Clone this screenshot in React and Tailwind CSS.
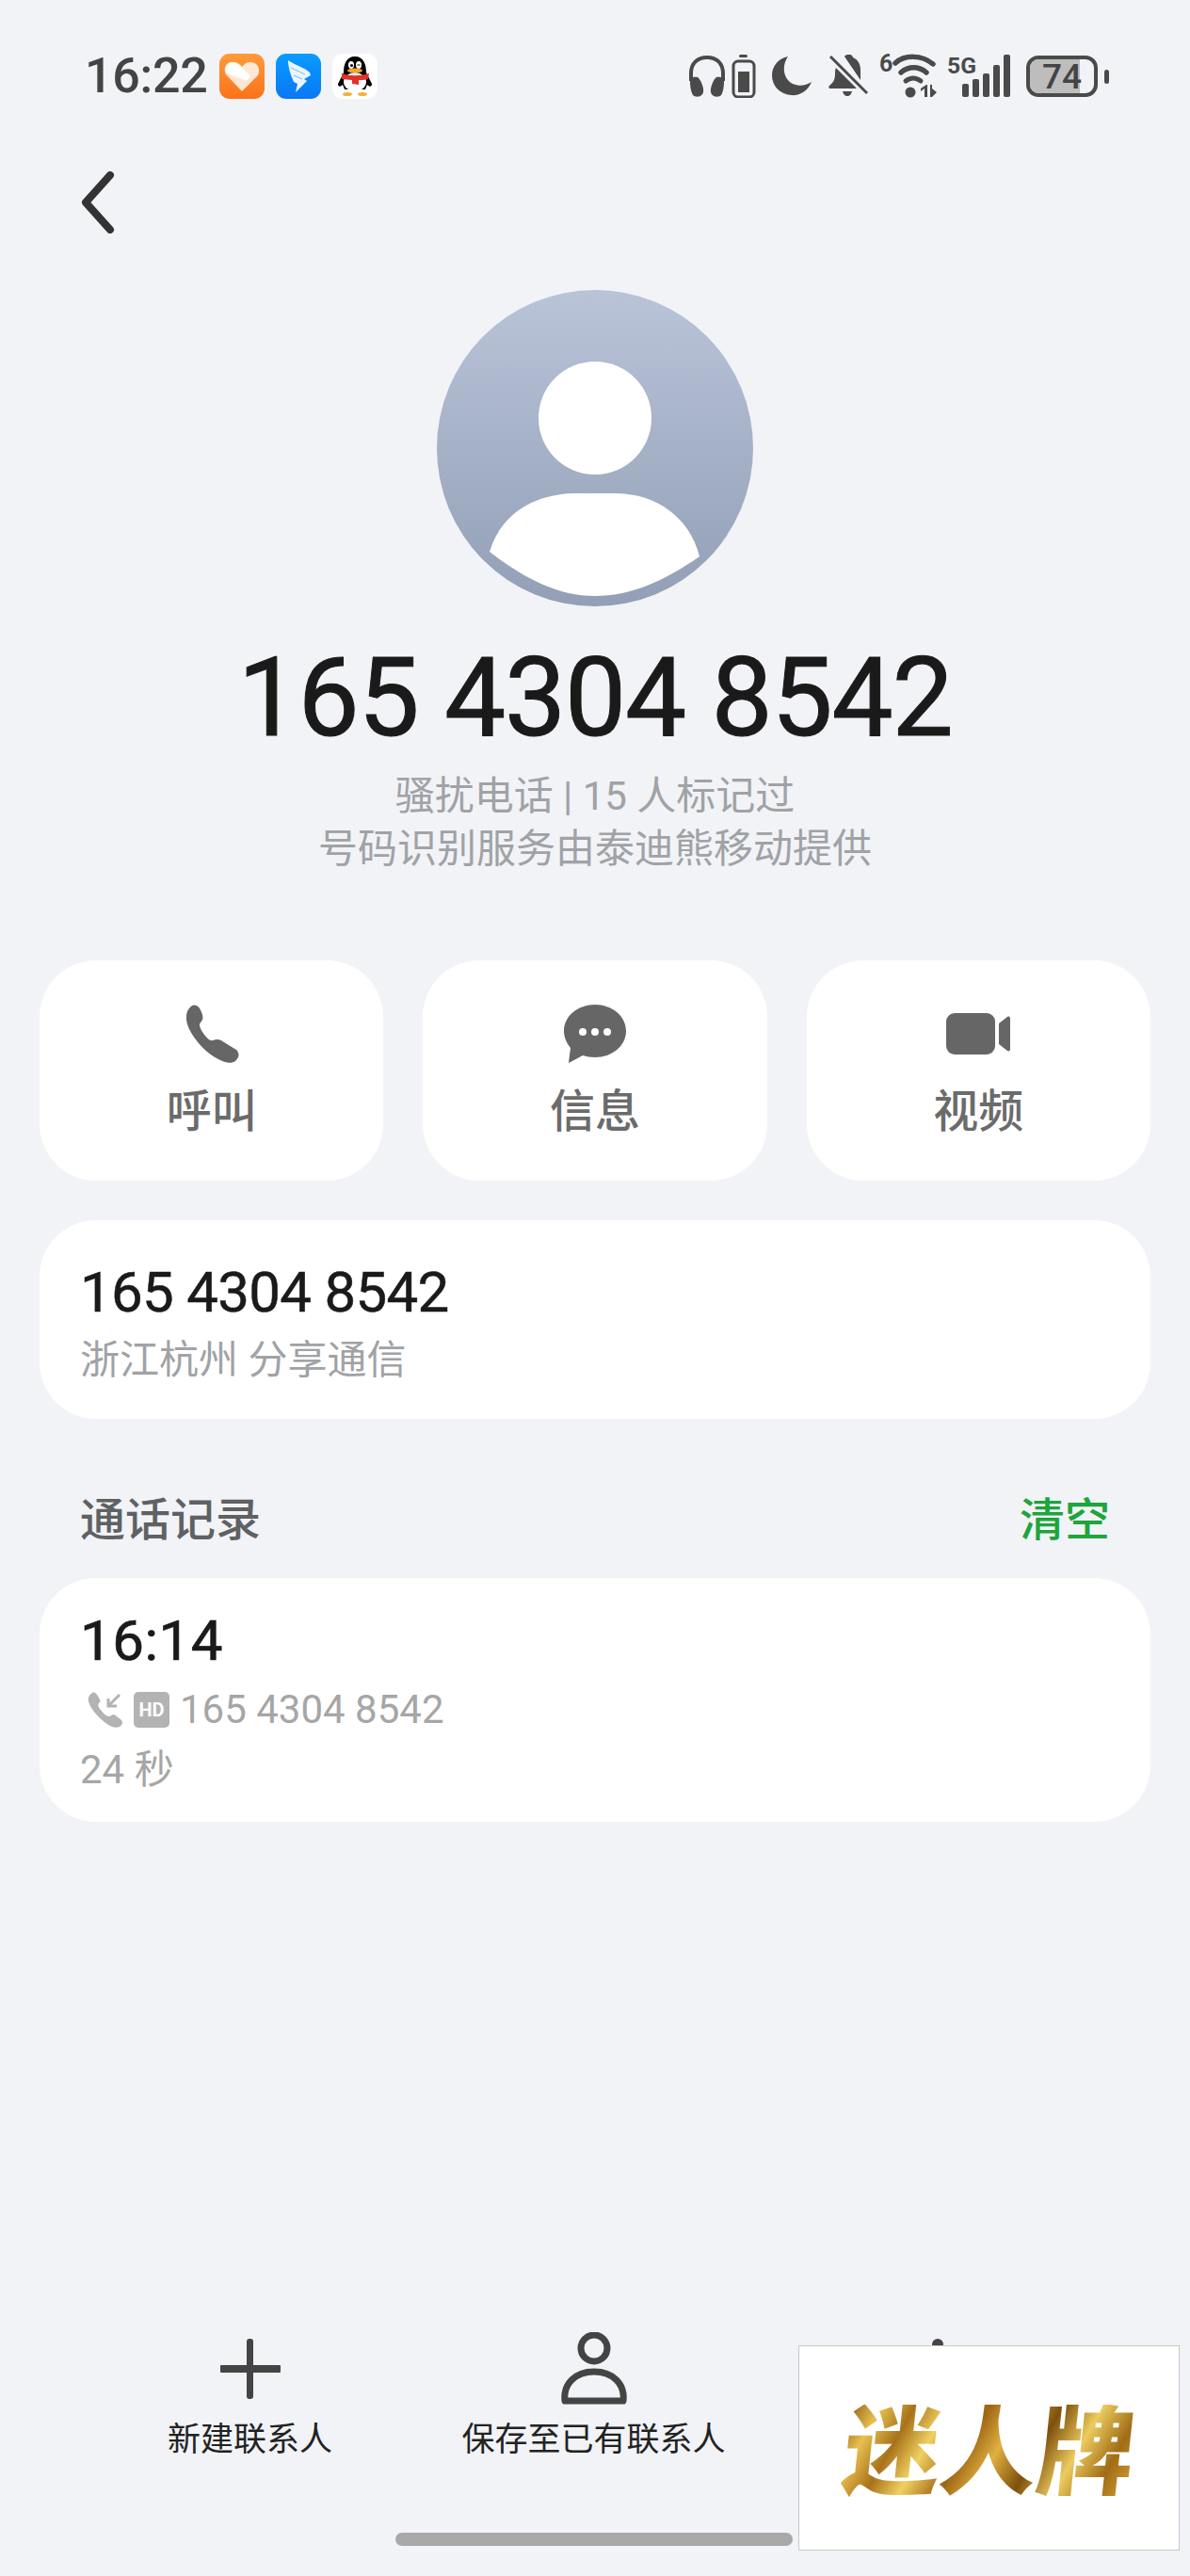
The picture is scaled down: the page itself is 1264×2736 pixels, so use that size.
// Экран карточки неизвестного номера
const AppIcon = ({ children, className = '' }) => (
  <div className={`w-12 h-12 rounded-[11px] overflow-hidden ${className}`}>
    <svg viewBox="0 0 48 48" className="w-12 h-12">{children}</svg>
  </div>
);

const StatusBar = () => (
  <div className="h-[162px] pl-[90px] pr-[86px] pt-[57px] flex items-start justify-between">
    <div className="flex items-center h-12">
      <span className="text-[52px] leading-none font-medium text-[#444] tracking-[-0.3px] w-[143px]">16:22</span>
      <div className="flex gap-3">
        <AppIcon className="bg-gradient-to-b from-[#ff9a3a] to-[#fb7217]">
          <path d="M24 40 L7 22 C3 14 9 8 15 9 C19 9 22 11 24 14 C27 10 30 9 34 9 C41 10 44 16 41 23 Z" fill="#fff" opacity="0.8" />
          <path d="M8 21 C4 14 10 8 15 9 C19 10 29 19 32 23 C33 27 28 30 25 27 Z" fill="#fff" />
        </AppIcon>
        <AppIcon className="bg-gradient-to-b from-[#0c9bff] to-[#0a78f5]">
          <path d="M13 7 C20 12 31 15 36 20 L37 23 L30 27 L33 29 L21 41 L23 32 L19 30 C16 23 13 15 13 7 Z" fill="#eaf5ff" />
          <path d="M16 15 L31 22 M19 23 L28 27" stroke="#4fb0fb" strokeWidth="0.8" />
        </AppIcon>
        <AppIcon className="bg-white">
          <path d="M24 3 C15 3 12 11 12 20 L6 32 C6 35 8 36 11 33 L13 38 L35 38 L37 33 C40 36 42 35 42 32 L36 20 C36 11 33 3 24 3 Z" fill="#000" />
          <ellipse cx="24" cy="30" rx="12" ry="10" fill="#fff" />
          <path d="M10 21 C18 24 30 24 39 21 L38 27 C35 28 30 28 28 28 L28 33 L21 32 L21 28 C17 28 13 27 10 27 Z" fill="#e2302b" />
          <ellipse cx="20" cy="12" rx="3" ry="4" fill="#fff" />
          <ellipse cx="28" cy="12" rx="3" ry="4" fill="#fff" />
          <circle cx="20.5" cy="12.5" r="1.5" fill="#000" />
          <path d="M26.5 12 L29.500 12" stroke="#000" strokeWidth="1.200" />
          <ellipse cx="24" cy="18" rx="8" ry="2.600" fill="#f6a623" />
          <ellipse cx="16" cy="43" rx="5" ry="2" fill="#f6b13d" />
          <ellipse cx="32" cy="43" rx="5" ry="2" fill="#f6b13d" />
        </AppIcon>
      </div>
    </div>
    <div className="flex items-center h-12 text-[#4a4a4a]">
      {/* наушники */}
      <svg width="40" height="46" viewBox="0 0 40 46" className="mr-[6px]" fill="currentColor">
        <path d="M3 28 V20 C3 9 10 3 20 3 C30 3 37 9 37 20 V28" fill="none" stroke="currentColor" strokeWidth="4" />
        <path d="M2 29 C2 25 6 23 10 24 C13 26 17 35 16 40 C15 45 8 46 5 43 C3 40 2 34 2 29 Z" />
        <path d="M38 29 C38 25 34 23 30 24 C27 26 23 35 24 40 C25 45 32 46 35 43 C37 40 38 34 38 29 Z" />
      </svg>
      {/* батарея наушников */}
      <svg width="26" height="46" viewBox="0 0 26 46" className="mr-[17px]" fill="currentColor">
        <rect x="8" y="0" width="9" height="3" rx="1.500" />
        <rect x="2" y="7" width="22" height="38" rx="5" fill="none" stroke="currentColor" strokeWidth="3" />
        <rect x="7" y="18" width="12" height="22" />
      </svg>
      {/* луна */}
      <svg width="42" height="42" viewBox="0 0 42 42" className="mr-[18px]" fill="currentColor">
        <path d="M17 0 C10 10 12 24 22 29 C29 32 36 31 42 27 C38 37 29 42 20 41 C8 40 0 31 0 20 C0 10 7 2 17 0 Z" />
      </svg>
      {/* колокольчик выключен */}
      <svg width="42" height="46" viewBox="0 0 42 46" className="mr-[12px]" fill="currentColor">
        <path d="M17 2 C19 -1 25 -1 26 3 C31 5 34 10 34 16 V27 Z" />
        <path d="M8 14 L30 36 H1 C0 35 0 33 2 32 C6 29 7 25 7 20 C7 18 7 16 8 14 Z" />
        <path d="M15 39 H25 C24 43 22 44 20 44 C18 44 16 43 15 39 Z" />
        <path d="M2 3 L40 40" stroke="#f1f3f7" strokeWidth="7" />
        <path d="M2 2 L41 41" stroke="currentColor" strokeWidth="3" />
      </svg>
      {/* wifi 6 */}
      <svg width="62" height="50" viewBox="0 0 62 50" className="mr-[10px] overflow-visible" fill="currentColor">
        <text x="0" y="20" fontSize="25" fontWeight="700" fontFamily="Roboto, sans-serif">6</text>
        <path d="M17 11 C27 2 45 2 57 12" fill="none" stroke="currentColor" strokeWidth="5.500" strokeLinecap="round" />
        <path d="M23 21 C31 14 42 14 50 21" fill="none" stroke="currentColor" strokeWidth="5.500" strokeLinecap="round" />
        <path d="M28 30 C33 26 39 26 44 30" fill="none" stroke="currentColor" strokeWidth="5" strokeLinecap="round" />
        <circle cx="33" cy="42" r="5.500" />
        <path d="M48 47 V38 L44 41 V38 L50 34 H51 V47 Z" />
        <path d="M54 34 H56 V47 H54 Z M56 38 L61 42 L56 47 Z" />
      </svg>
      {/* 5G и сигнал */}
      <svg width="68" height="46" viewBox="0 0 68 46" className="mr-[16px] overflow-visible" fill="currentColor">
        <text x="0" y="20" fontSize="24" fontWeight="700" fontFamily="Roboto, sans-serif" textLength="31" lengthAdjust="spacingAndGlyphs">5G</text>
        <rect x="16" y="31" width="7" height="14" rx="2" />
        <rect x="27" y="26" width="7" height="19" rx="2" />
        <rect x="38" y="20" width="7" height="25" rx="2" />
        <rect x="49" y="11" width="7" height="34" rx="2" />
        <rect x="60" y="0" width="7" height="45" rx="2" />
      </svg>
      {/* батарея 74 */}
      <div className="relative flex items-center w-[88px] h-[44px]">
        <div className="relative w-[76px] h-[44px] rounded-[13px] border-[4px] border-[#4a4a4a] overflow-hidden flex items-center justify-center">
          <div className="absolute inset-y-0 left-0 w-[53px] bg-[#bdbdbd]" />
          <span className="relative text-[37px] leading-none font-medium text-[#444]">74</span>
        </div>
        <div className="ml-[7px] w-[5px] h-[15px] rounded-full bg-[#4a4a4a]" />
      </div>
    </div>
  </div>
);

const ActionButton = ({ label, children }) => (
  <div className="flex-1 h-[234px] rounded-[60px] bg-white flex flex-col items-center">
    <div className="h-[64px] mt-[46px] flex items-center justify-center text-[#666]">{children}</div>
    <span className="mt-[19px] text-[48px] leading-[64px] font-medium text-[#6b6b6b]">{label}</span>
  </div>
);

const BottomAction = ({ label, children }) => (
  <div className="flex flex-col items-center w-[365px]">
    <div className="h-[80px] flex items-center justify-center text-[#444]">{children}</div>
    {label && <span className="mt-[12px] text-[35px] leading-[48px] text-[#222]">{label}</span>}
  </div>
);

export default function App() {
  return (
    <div className="relative w-[1264px] h-[2736px] bg-[#f1f3f7] flex flex-col overflow-hidden [font-family:Roboto,'Noto_Sans_CJK_SC',sans-serif]">
      <StatusBar />

      {/* Назад */}
      <div className="h-[146px] pl-[84px] pt-[20px]">
        <svg width="40" height="66" viewBox="0 0 40 66" fill="none" stroke="#333" strokeWidth="8" strokeLinecap="round" strokeLinejoin="round">
          <path d="M33 4 L7 33 L33 62" />
        </svg>
      </div>

      {/* Аватар */}
      <div className="flex flex-col items-center">
        <div className="w-[336px] h-[336px] rounded-full bg-gradient-to-b from-[#b9c4d9] to-[#939fb6] overflow-hidden">
          <svg viewBox="0 0 336 336" className="w-[336px] h-[336px]">
            <circle cx="168" cy="136" r="60" fill="#fff" />
            <path d="M56 278 C70 232 110 217 145 216 H192 C232 217 268 240 279 283 C240 310 205 325 168 325 C130 325 95 308 56 278 Z" fill="#fff" />
          </svg>
        </div>
        <div className="mt-[32px] text-[116px] leading-[130px] text-[#1a1a1a] tracking-[-1.200px] [-webkit-text-stroke:1px_#1a1a1a]">165 4304 8542</div>
        <div className="mt-[12px] text-[42px] leading-[56px] text-[#a0a2a5] text-center">
          <div>骚扰电话 | 15 人标记过</div>
          <div>号码识别服务由泰迪熊移动提供</div>
        </div>
      </div>

      {/* Кнопки действий */}
      <div className="mt-[90px] px-[42px] flex gap-[42px]">
        <ActionButton label="呼叫">
          <svg width="60" height="62" viewBox="0 0 60 62" fill="currentColor">
            <path d="M9 1 C13 -1 17 2 19 8 C21 13 21 16 18 19 C16 21 17 24 20 29 C24 35 28 39 31 38 C36 36 39 37 43 40 L56 48 C60 52 59 56 55 60 C51 63 44 62 37 58 C25 52 13 40 6 26 C1 15 2 6 9 1 Z" />
          </svg>
        </ActionButton>
        <ActionButton label="信息">
          <svg width="66" height="62" viewBox="0 0 66 62" fill="currentColor">
            <path d="M33 0 C51 0 66 12 66 28 C66 44 51 56 33 56 C28 56 24 55 20 54 L5 62 L7 46 C3 41 0 35 0 28 C0 12 15 0 33 0 Z" />
            <circle cx="20" cy="29" r="4" fill="#fff" />
            <circle cx="33" cy="29" r="4" fill="#fff" />
            <circle cx="46" cy="29" r="4" fill="#fff" />
          </svg>
        </ActionButton>
        <ActionButton label="视频">
          <svg width="68" height="44" viewBox="0 0 68 44" fill="currentColor">
            <rect x="0" y="0" width="52" height="44" rx="9" />
            <path d="M56 11 L65 4 C67 3 68 4 68 6 V38 C68 40 67 41 65 40 L56 33 Z" />
          </svg>
        </ActionButton>
      </div>

      {/* Номер */}
      <div className="mt-[42px] mx-[42px] h-[211px] rounded-[60px] bg-white pl-[43px] pt-[42px]">
        <div className="text-[60px] leading-[70px] text-[#1a1a1a] tracking-[-0.700px] [-webkit-text-stroke:0.5px_#1a1a1a]">165 4304 8542</div>
        <div className="mt-[9px] text-[42px] leading-[56px] text-[#a0a2a5]">浙江杭州 分享通信</div>
      </div>

      {/* Журнал вызовов */}
      <div className="mt-[76px] px-[85px] flex justify-between items-center h-[64px]">
        <span className="text-[48px] leading-[64px] font-medium text-[#5f6163]">通话记录</span>
        <span className="text-[48px] leading-[64px] font-medium text-[#1ea53b]">清空</span>
      </div>
      <div className="mt-[29px] mx-[42px] h-[259px] rounded-[60px] bg-white pl-[43px] pt-[30px]">
        <div className="text-[60px] leading-[74px] text-[#1a1a1a] tracking-[0.500px] [-webkit-text-stroke:0.7px_#1a1a1a]">16:14</div>
        <div className="mt-[8px] h-[56px] flex items-center text-[42px] text-[#a6a6a6]">
          <svg width="38" height="38" viewBox="0 0 38 38" className="ml-[8px] mr-[11px]" fill="#b3b3b3">
            <path d="M5 1 C7 0 9 1 10 3 L13 8 C14 10 13 11 12 12 C11 14 11 15 13 18 C16 22 19 25 22 26 C24 26 25 25 27 24 C29 24 30 25 36 30 C38 33 37 35 34 37 C30 39 24 37 18 32 C9 25 3 17 1 10 C0 6 2 3 5 1 Z" />
            <path d="M34 3 L22 15 M22 7 V15 H31" fill="none" stroke="#b3b3b3" strokeWidth="3" />
          </svg>
          <div className="w-[38px] h-[38px] rounded-[5px] bg-[#b3b3b3] flex items-center justify-center text-[20px] leading-none font-bold text-white">HD</div>
          <span className="ml-[11px] leading-[56px]">165 4304 8542</span>
        </div>
        <div className="mt-[8px] text-[42px] leading-[56px] text-[#a6a6a6]">24 秒</div>
      </div>

      {/* Нижняя панель */}
      <div className="mt-auto px-[83px] pb-[120px] flex">
        <BottomAction label="新建联系人">
          <svg width="64" height="64" viewBox="0 0 64 64" fill="#444">
            <rect x="28" y="0" width="7" height="64" rx="3" />
            <rect x="0" y="28" width="64" height="8" rx="1" />
          </svg>
        </BottomAction>
        <BottomAction label="保存至已有联系人">
          <svg width="70" height="78" viewBox="0 0 70 78" fill="none" stroke="#444" strokeWidth="7">
            <ellipse cx="35" cy="17" rx="14" ry="14" />
            <path d="M4 73 C2 55 15 42 35 42 C55 42 68 55 66 73 Z" strokeLinejoin="round" />
          </svg>
        </BottomAction>
        {/* третье действие закрыто водяным знаком, видна только верхняя точка */}
        <BottomAction>
          <svg width="12" height="64" viewBox="0 0 12 64" fill="#444">
            <circle cx="6" cy="6" r="6" />
            <circle cx="6" cy="32" r="6" />
            <circle cx="6" cy="58" r="6" />
          </svg>
        </BottomAction>
      </div>

      {/* Индикатор домой */}
      <div className="absolute left-[420px] bottom-[32px] w-[422px] h-[14px] rounded-full bg-[#a8a8a8]" />

      {/* Водяной знак поверх экрана */}
      <div className="absolute left-[848px] top-[2491px] w-[405px] h-[218px] bg-white border border-[#c8c8c8] flex items-center justify-center pt-[10px]">
        <span className="text-[103px] leading-none font-black -skew-x-6 whitespace-nowrap text-transparent bg-clip-text bg-[linear-gradient(115deg,#8a5a10_0%,#e8c04f_10%,#a8721a_20%,#f0d060_30%,#9c6512_42%,#e0b040_52%,#7e500c_64%,#eccb5e_76%,#a06c16_88%,#d8a838_100%)]">迷人牌</span>
      </div>
    </div>
  );
}
